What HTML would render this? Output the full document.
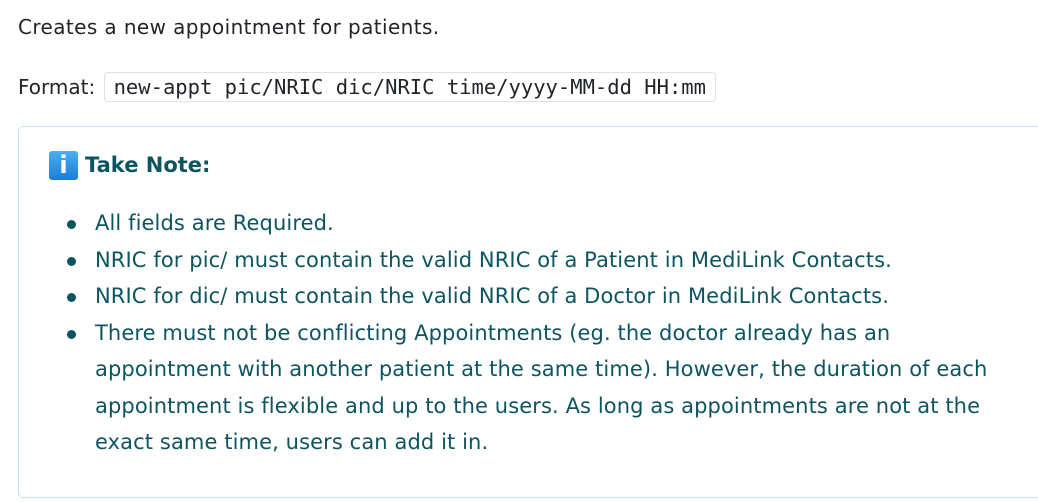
<!DOCTYPE html>
<html><head><meta charset="utf-8"><style>
body{margin:0;width:1038px;height:502px;overflow:hidden;background:#fff;font-family:"DejaVu Sans",sans-serif;color:#212529;}
.p1{position:absolute;left:18px;top:12px;font-size:20px;line-height:30px;letter-spacing:0.4px}
.p2{position:absolute;left:18px;top:72px;font-size:20px;line-height:30px;}
code{font-family:"DejaVu Sans Mono",monospace;font-size:20.5px;border:1px solid #dee2e6;border-radius:4px;padding:2px 9px;background:#fff;color:#212529;margin-left:2px;}
.box{position:absolute;left:18px;top:126px;width:1040px;height:372px;border:1px solid #bee5eb;border-radius:5px;color:#0c5460;box-sizing:border-box;}
.h{position:absolute;left:30px;top:23px;font-size:21px;font-weight:bold;line-height:30px;display:flex;align-items:center;}
.ic{width:29px;height:29px;background:linear-gradient(#4aaef0,#1a7fd6);border-radius:3px;color:#fff;font-size:24px;text-align:center;line-height:29px;margin-right:7px;}
ul{position:absolute;left:0;top:78px;margin:0;padding-left:76px;font-size:21px;line-height:36.5px;width:902px;list-style:none}
li{position:relative;letter-spacing:0.1px}
li:before{content:"";position:absolute;left:-28px;top:15px;width:9px;height:9px;border-radius:50%;background:#0c5460}
</style></head><body>
<div class="p1">Creates a new appointment for patients.</div>
<div class="p2">Format: <code>new-appt pic/NRIC dic/NRIC time/yyyy-MM-dd HH:mm</code></div>
<div class="box">
<div class="h"><span class="ic">i</span>Take Note:</div>
<ul>
<li>All fields are Required.</li>
<li>NRIC for pic/ must contain the valid NRIC of a Patient in MediLink Contacts.</li>
<li>NRIC for dic/ must contain the valid NRIC of a Doctor in MediLink Contacts.</li>
<li>There must not be conflicting Appointments (eg. the doctor already has an appointment with another patient at the same time). However, the duration of each appointment is flexible and up to the users. As long as appointments are not at the exact same time, users can add it in.</li>
</ul>
</div>
</body></html>
